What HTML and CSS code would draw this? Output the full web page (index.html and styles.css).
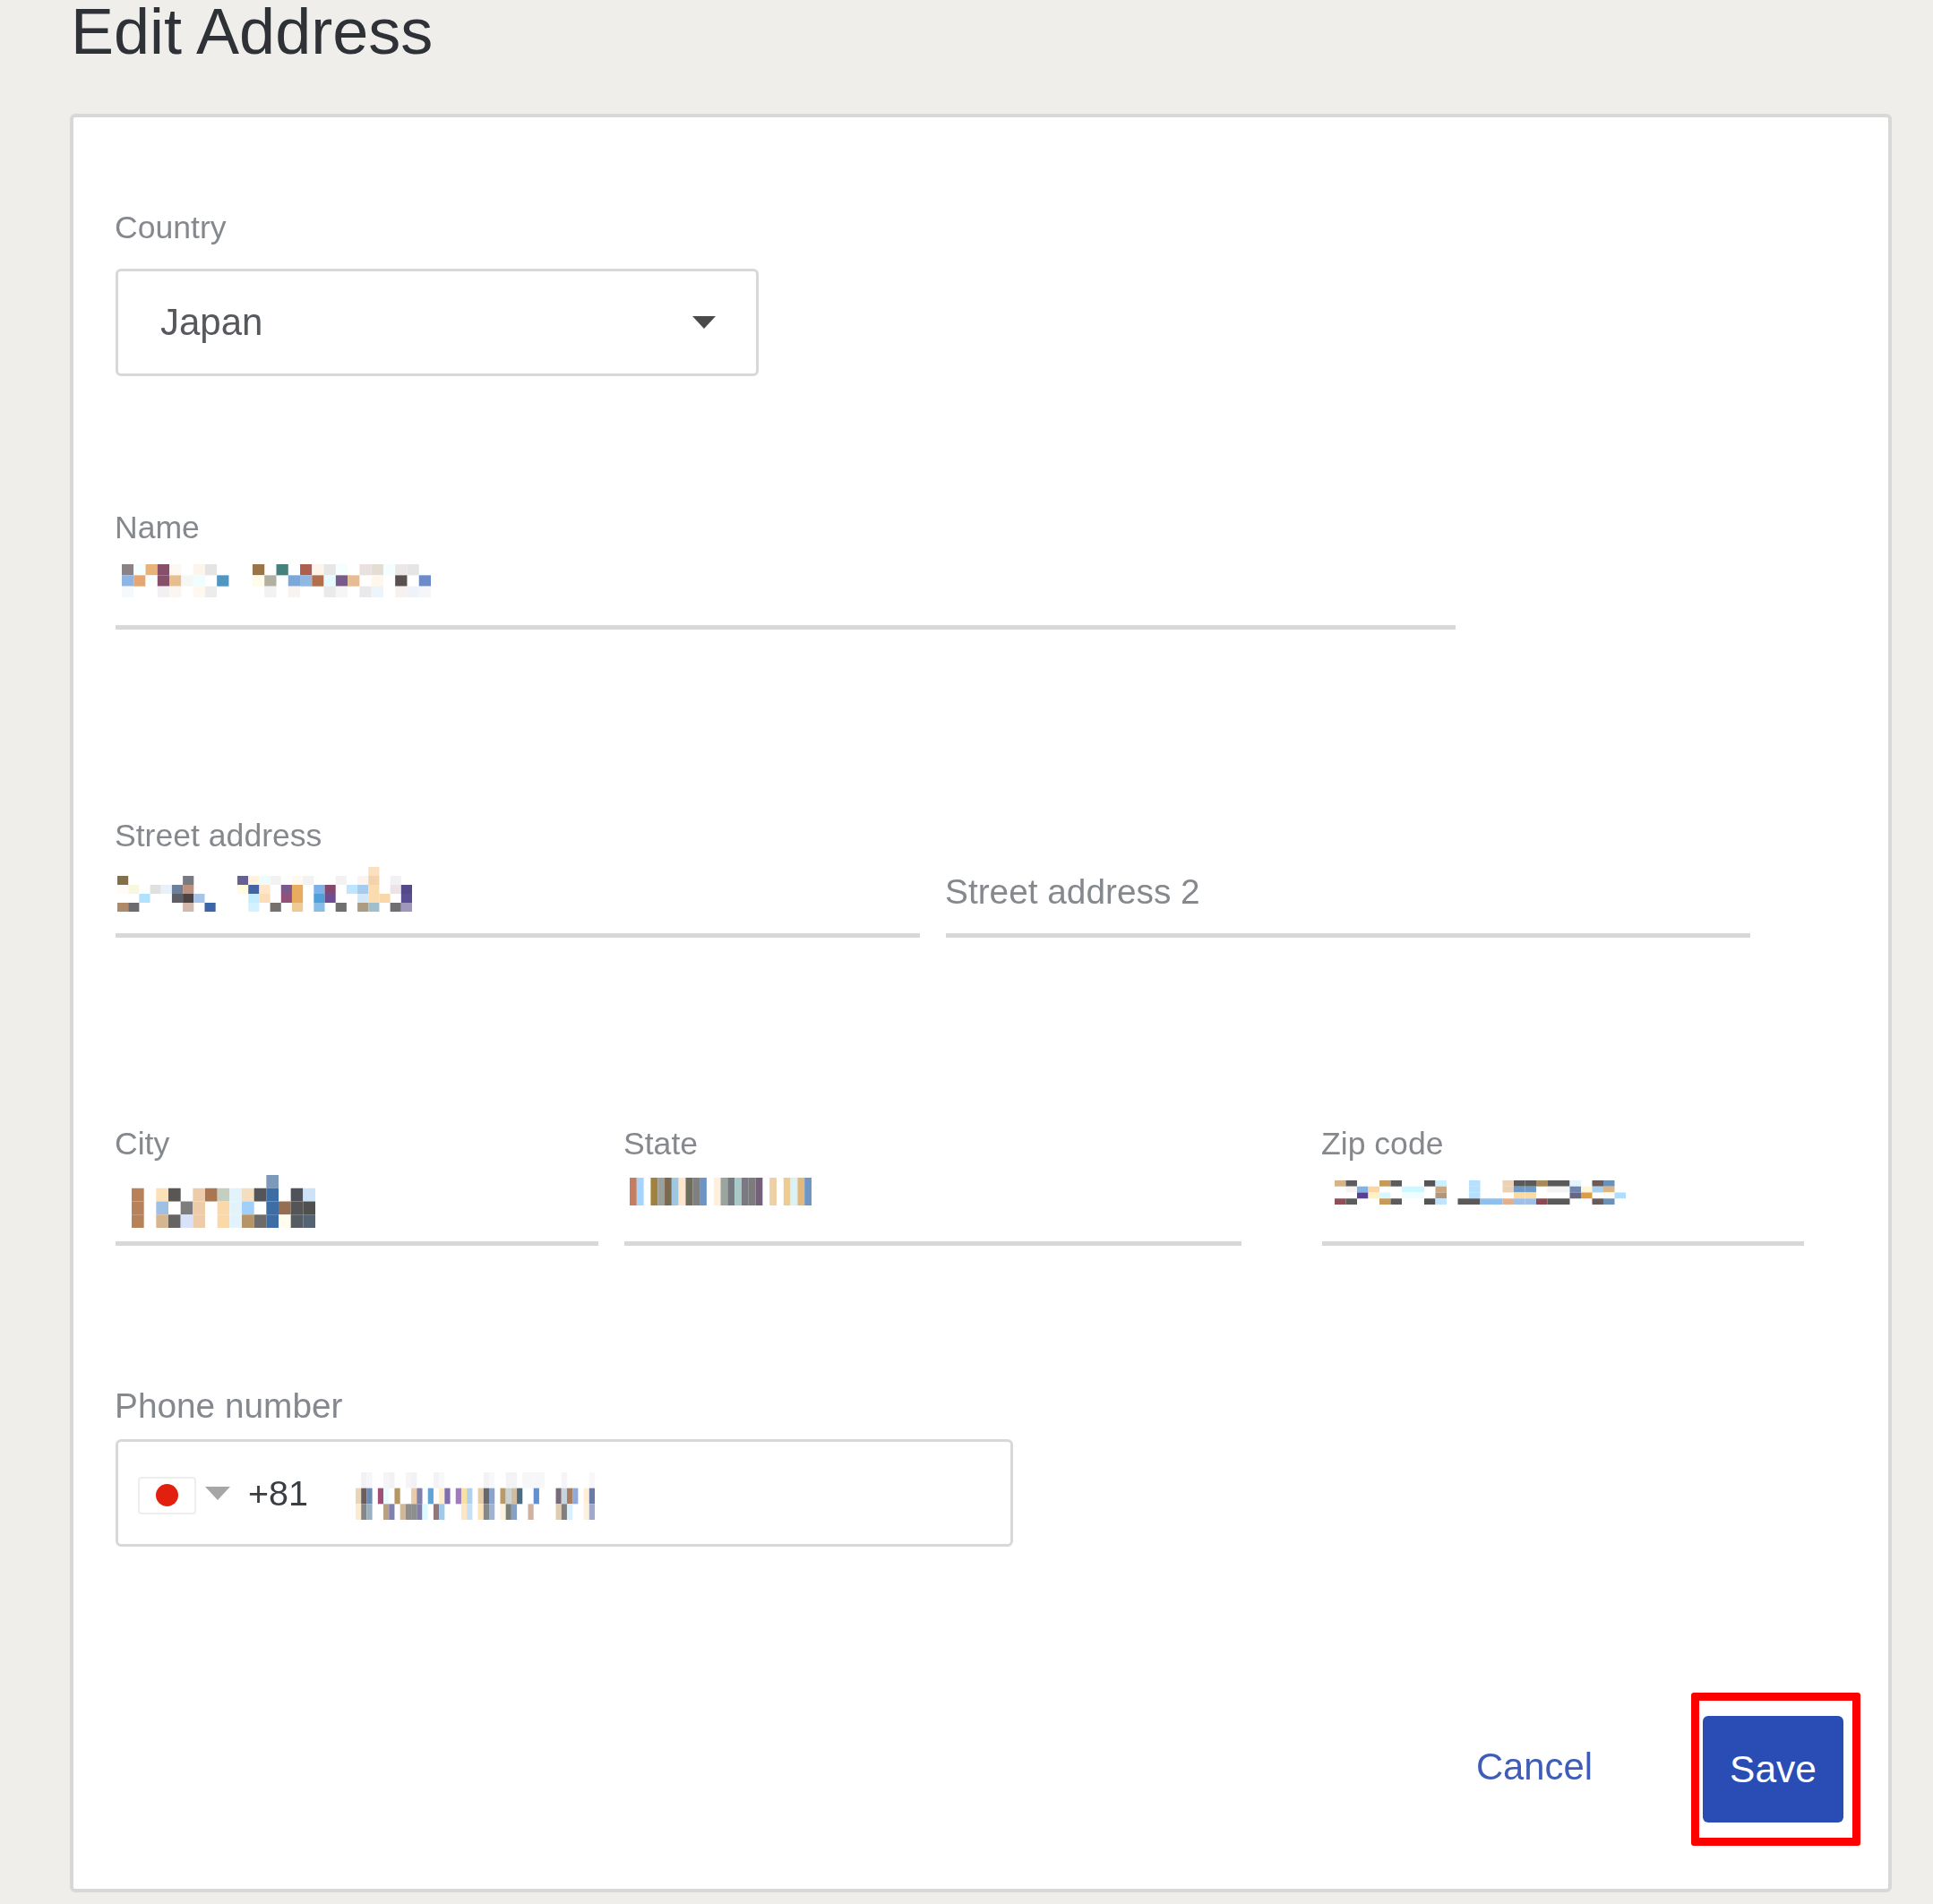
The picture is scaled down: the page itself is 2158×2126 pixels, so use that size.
FILE: index.html
```html
<!DOCTYPE html>
<html lang="en">
<head>
<meta charset="utf-8">
<title>Edit Address</title>
<link rel="stylesheet" href="styles.css">
</head>
<body>
<main class="page">
  <h1 class="title">Edit Address</h1>
  <form class="card">
    <div class="field">
      <div class="label">Country</div>
      <div class="select">
        <span class="select-value">Japan</span>
        <svg class="select-caret" width="26" height="14" viewBox="0 0 26 14"><path d="M0 0H26L13 14Z"/></svg>
      </div>
    </div>

    <div class="row row-name">
      <div class="field field-name">
        <div class="label">Name</div>
        <div class="input input-name">
          <svg class="mosaic" width="345" height="37" viewBox="0 0 26 3" preserveAspectRatio="none">
            <rect x="0" y="0" fill="#8a8285"/><rect x="1" y="0" fill="#f6ffff"/><rect x="2" y="0" fill="#e9b277"/><rect x="3" y="0" fill="#87506a"/><rect x="4" y="0" fill="#fdf8f2"/><rect x="6" y="0" fill="#fdf5ec"/><rect x="7" y="0" fill="#e4e4e4"/><rect x="11" y="0" fill="#9b7447"/><rect x="13" y="0" fill="#45827f"/><rect x="15" y="0" fill="#ae5f50"/><rect x="16" y="0" fill="#fdf4ec"/><rect x="17" y="0" fill="#e6e6e6"/><rect x="18" y="0" fill="#f6ffff"/><rect x="20" y="0" fill="#ebe0e0"/><rect x="21" y="0" fill="#e4ddd4"/><rect x="22" y="0" fill="#f3ffff"/><rect x="23" y="0" fill="#ebe7e6"/><rect x="24" y="0" fill="#e6e5e5"/>
            <rect x="0" y="1" fill="#8fb5e4"/><rect x="1" y="1" fill="#e5a672"/><rect x="2" y="1" fill="#fbffff"/><rect x="3" y="1" fill="#87506a"/><rect x="4" y="1" fill="#e8be8e"/><rect x="5" y="1" fill="#f6f6f4"/><rect x="6" y="1" fill="#effdff"/><rect x="8" y="1" fill="#4f97c1"/><rect x="11" y="1" fill="#fffde9"/><rect x="12" y="1" fill="#b1b1a1"/><rect x="14" y="1" fill="#7ca8d9"/><rect x="15" y="1" fill="#8fb8e3"/><rect x="16" y="1" fill="#b26f4b"/><rect x="17" y="1" fill="#e6fbff"/><rect x="18" y="1" fill="#775b8b"/><rect x="19" y="1" fill="#e6bd92"/><rect x="21" y="1" fill="#fff7eb"/><rect x="23" y="1" fill="#595050"/><rect x="25" y="1" fill="#6b8bc9"/>
            <rect x="0" y="2" fill="#f5f9fc"/><rect x="3" y="2" fill="#f2f0f2"/><rect x="4" y="2" fill="#fbf6f2"/><rect x="6" y="2" fill="#fef8f0"/><rect x="7" y="2" fill="#ececec"/><rect x="12" y="2" fill="#f3f1f2"/><rect x="14" y="2" fill="#f8f3ee"/><rect x="17" y="2" fill="#eaeaea"/><rect x="18" y="2" fill="#f6f6f8"/><rect x="20" y="2" fill="#e9e9eb"/><rect x="21" y="2" fill="#ecf4fc"/><rect x="23" y="2" fill="#f6f0ee"/><rect x="24" y="2" fill="#eef3fa"/><rect x="25" y="2" fill="#f6f6f9"/>
          </svg>
        </div>
      </div>
    </div>

    <div class="row row-street">
      <div class="field field-half">
        <div class="label">Street address</div>
        <div class="input input-street">
          <svg class="mosaic" width="329" height="50" viewBox="0 0 27 5" preserveAspectRatio="none">
            <rect x="23" y="0" fill="#fbe0c0"/>
            <rect x="0" y="1" fill="#82704c"/><rect x="6" y="1" fill="#797b82"/><rect x="11" y="1" fill="#676092"/><rect x="12" y="1" fill="#fff3de"/><rect x="13" y="1" fill="#effcff"/><rect x="14" y="1" fill="#f2f2f3"/><rect x="16" y="1" fill="#fff9f2"/><rect x="17" y="1" fill="#f2f2f2"/><rect x="20" y="1" fill="#f2f2f5"/><rect x="22" y="1" fill="#fcf4f0"/><rect x="23" y="1" fill="#f2d3ab"/><rect x="25" y="1" fill="#f1f0f2"/>
            <rect x="0" y="2" fill="#fffcf8"/><rect x="1" y="2" fill="#f8f8e0"/><rect x="3" y="2" fill="#e0e0e0"/><rect x="4" y="2" fill="#e8f0fa"/><rect x="5" y="2" fill="#6c7f9b"/><rect x="6" y="2" fill="#bb9280"/><rect x="11" y="2" fill="#fffce0"/><rect x="12" y="2" fill="#4564a5"/><rect x="13" y="2" fill="#ffe5c9"/><rect x="15" y="2" fill="#7a5a8a"/><rect x="16" y="2" fill="#e8ab5f"/><rect x="18" y="2" fill="#7cb0e6"/><rect x="19" y="2" fill="#83486b"/><rect x="21" y="2" fill="#bde5ff"/><rect x="22" y="2" fill="#a6cbec"/><rect x="23" y="2" fill="#fbdcb0"/><rect x="25" y="2" fill="#ece3e6"/><rect x="26" y="2" fill="#56498a"/>
            <rect x="2" y="3" fill="#b0e1ff"/><rect x="5" y="3" fill="#5c5f66"/><rect x="6" y="3" fill="#4c4444"/><rect x="7" y="3" fill="#a5c4e8"/><rect x="12" y="3" fill="#c4eeff"/><rect x="13" y="3" fill="#fddcb9"/><rect x="15" y="3" fill="#93507a"/><rect x="16" y="3" fill="#e8ab5f"/><rect x="18" y="3" fill="#4f9fd8"/><rect x="19" y="3" fill="#6f4d94"/><rect x="22" y="3" fill="#d0e8f8"/><rect x="23" y="3" fill="#fbdcb0"/><rect x="24" y="3" fill="#f8d8a8"/><rect x="26" y="3" fill="#5a4f92"/>
            <rect x="0" y="4" fill="#ae8a68"/><rect x="1" y="4" fill="#6c6c70"/><rect x="6" y="4" fill="#d3b8ae"/><rect x="8" y="4" fill="#3c66a8"/><rect x="12" y="4" fill="#d3f2ff"/><rect x="14" y="4" fill="#76716c"/><rect x="16" y="4" fill="#efca95"/><rect x="18" y="4" fill="#88bde5"/><rect x="20" y="4" fill="#6f6f72"/><rect x="22" y="4" fill="#ac9c84"/><rect x="23" y="4" fill="#9fbfcc"/><rect x="25" y="4" fill="#6f6f72"/><rect x="26" y="4" fill="#a097bd"/>
          </svg>
        </div>
      </div>
      <div class="field field-half">
        <div class="label"></div>
        <div class="input input-placeholder">Street address 2</div>
      </div>
    </div>

    <div class="row row-city">
      <div class="field field-city">
        <div class="label">City</div>
        <div class="input input-city">
          <svg class="mosaic" width="205" height="59" viewBox="0 0 15 4" preserveAspectRatio="none">
            <rect x="11" y="0" fill="#7c99bb"/>
            <rect x="0" y="1" fill="#b7815a"/><rect x="2" y="1" fill="#fbe0b8"/><rect x="3" y="1" fill="#595654"/><rect x="5" y="1" fill="#eeccaa"/><rect x="6" y="1" fill="#a9764f"/><rect x="7" y="1" fill="#c5cfc0"/><rect x="8" y="1" fill="#e2f3fc"/><rect x="9" y="1" fill="#f3dfc0"/><rect x="10" y="1" fill="#535558"/><rect x="11" y="1" fill="#3e6ca5"/><rect x="13" y="1" fill="#4f5259"/><rect x="14" y="1" fill="#cbe2f8"/>
            <rect x="0" y="2" fill="#b7815a"/><rect x="2" y="2" fill="#9fc0e5"/><rect x="4" y="2" fill="#7d7d7d"/><rect x="5" y="2" fill="#eeccaa"/><rect x="7" y="2" fill="#fad8a8"/><rect x="8" y="2" fill="#e2f3fc"/><rect x="9" y="2" fill="#a0cffc"/><rect x="11" y="2" fill="#3e6ca5"/><rect x="12" y="2" fill="#956f52"/><rect x="13" y="2" fill="#555555"/><rect x="14" y="2" fill="#50504e"/>
            <rect x="0" y="3" fill="#b7815a"/><rect x="2" y="3" fill="#d6b690"/><rect x="3" y="3" fill="#656462"/><rect x="4" y="3" fill="#d8e2f8"/><rect x="5" y="3" fill="#eeccaa"/><rect x="7" y="3" fill="#fad8a8"/><rect x="8" y="3" fill="#e2f3fc"/><rect x="9" y="3" fill="#b5946a"/><rect x="10" y="3" fill="#6e6c6a"/><rect x="11" y="3" fill="#3e6ca5"/><rect x="12" y="3" fill="#fffcf0"/><rect x="13" y="3" fill="#565c62"/><rect x="14" y="3" fill="#546472"/>
          </svg>
        </div>
      </div>
      <div class="field field-state">
        <div class="label">State</div>
        <div class="input input-state">
          <svg class="mosaic" width="203" height="31" viewBox="0 0 26 1" preserveAspectRatio="none">
            <rect x="0" y="0" fill="#c47d60"/><rect x="1" y="0" fill="#a5d4ff"/><rect x="3" y="0" fill="#a0813d"/><rect x="4" y="0" fill="#9ca09a"/><rect x="5" y="0" fill="#7c6a50"/><rect x="6" y="0" fill="#9fc7e0"/><rect x="7" y="0" fill="#fde6cd"/><rect x="8" y="0" fill="#6e6e5e"/><rect x="9" y="0" fill="#808080"/><rect x="10" y="0" fill="#6c94c4"/><rect x="12" y="0" fill="#fff0de"/><rect x="13" y="0" fill="#9aa59d"/><rect x="14" y="0" fill="#757b80"/><rect x="15" y="0" fill="#a9c9c9"/><rect x="16" y="0" fill="#7a7880"/><rect x="17" y="0" fill="#7c7c7c"/><rect x="18" y="0" fill="#75607a"/><rect x="20" y="0" fill="#edd0a4"/><rect x="22" y="0" fill="#eecb90"/><rect x="23" y="0" fill="#d8f2f8"/><rect x="24" y="0" fill="#e3b87c"/><rect x="25" y="0" fill="#7096c6"/>
          </svg>
        </div>
      </div>
      <div class="field field-zip">
        <div class="label">Zip code</div>
        <div class="input input-zip">
          <svg class="mosaic" width="325" height="27" viewBox="0 0 26 4" preserveAspectRatio="none">
            <rect x="0" y="0" fill="#d8b388"/><rect x="1" y="0" fill="#5c5c5c"/><rect x="4" y="0" fill="#c89a5a"/><rect x="5" y="0" fill="#5c5c5c"/><rect x="8" y="0" fill="#555555"/><rect x="9" y="0" fill="#cdf0ff"/><rect x="12" y="0" fill="#b5e0ff"/><rect x="15" y="0" fill="#ecd2b4"/><rect x="16" y="0" fill="#5a5a5a"/><rect x="17" y="0" fill="#5a5a5a"/><rect x="18" y="0" fill="#a78a58"/><rect x="19" y="0" fill="#5a5a5a"/><rect x="20" y="0" fill="#5a5a5a"/><rect x="21" y="0" fill="#e2f5ff"/><rect x="23" y="0" fill="#6a5a5a"/><rect x="24" y="0" fill="#6a90b8"/>
            <rect x="1" y="1" fill="#f4f4f4"/><rect x="2" y="1" fill="#83b3e5"/><rect x="3" y="1" fill="#fcd5a5"/><rect x="6" y="1" fill="#cdf8ff"/><rect x="7" y="1" fill="#cdf8ff"/><rect x="9" y="1" fill="#cca680"/><rect x="12" y="1" fill="#b5e0ff"/><rect x="15" y="1" fill="#ecd2b4"/><rect x="16" y="1" fill="#6e9ac8"/><rect x="17" y="1" fill="#6e9ac8"/><rect x="19" y="1" fill="#f4f4f4"/><rect x="20" y="1" fill="#f4f4f4"/><rect x="21" y="1" fill="#6e85b0"/><rect x="22" y="1" fill="#fff5d8"/><rect x="23" y="1" fill="#a8d0ee"/><rect x="24" y="1" fill="#dcb584"/>
            <rect x="2" y="2" fill="#5a3f96"/><rect x="3" y="2" fill="#fff2c0"/><rect x="4" y="2" fill="#d8f8ff"/><rect x="6" y="2" fill="#effdff"/><rect x="7" y="2" fill="#effdff"/><rect x="9" y="2" fill="#b0967c"/><rect x="12" y="2" fill="#b5e0ff"/><rect x="16" y="2" fill="#fddba0"/><rect x="17" y="2" fill="#fddba0"/><rect x="21" y="2" fill="#666685"/><rect x="22" y="2" fill="#dd9c48"/><rect x="24" y="2" fill="#fffaf0"/><rect x="25" y="2" fill="#aedeff"/>
            <rect x="0" y="3" fill="#8f4f58"/><rect x="1" y="3" fill="#5c5c5c"/><rect x="4" y="3" fill="#c89a5a"/><rect x="5" y="3" fill="#5c5c5c"/><rect x="8" y="3" fill="#555555"/><rect x="9" y="3" fill="#c0e4ff"/><rect x="11" y="3" fill="#5a5a5a"/><rect x="12" y="3" fill="#5a5a5a"/><rect x="13" y="3" fill="#8fbfec"/><rect x="14" y="3" fill="#8fbfec"/><rect x="15" y="3" fill="#e4b08c"/><rect x="16" y="3" fill="#a0bfe6"/><rect x="17" y="3" fill="#a0bfe6"/><rect x="18" y="3" fill="#8a4a55"/><rect x="19" y="3" fill="#5a5a5a"/><rect x="20" y="3" fill="#5a5a5a"/><rect x="23" y="3" fill="#6a5a5a"/><rect x="24" y="3" fill="#6a90b8"/>
          </svg>
        </div>
      </div>
    </div>

    <div class="row-phone">
      <div class="label label-phone">Phone number</div>
      <div class="phone">
        <span class="flag"><span class="flag-dot"></span></span>
        <svg class="phone-caret" width="28" height="15" viewBox="0 0 28 15"><path d="M0 0H28L14 15Z"/></svg>
        <span class="dial">+81</span>
        <svg class="mosaic mosaic-phone" width="267" height="53" viewBox="0 0 43 3" preserveAspectRatio="none">
          <rect x="1" y="0" fill="#f2f2f6"/><rect x="2" y="0" fill="#f6f6fa"/><rect x="5" y="0" fill="#f5f5f8"/><rect x="6" y="0" fill="#f2f2f6"/><rect x="9" y="0" fill="#f8f4f6"/><rect x="10" y="0" fill="#f2f2f6"/><rect x="14" y="0" fill="#f3f2f6"/><rect x="15" y="0" fill="#f8f8fb"/><rect x="23" y="0" fill="#f3f2f5"/><rect x="24" y="0" fill="#f8f8fb"/><rect x="27" y="0" fill="#f3f3f6"/><rect x="28" y="0" fill="#f3f3f6"/><rect x="30" y="0" fill="#f7f7f9"/><rect x="31" y="0" fill="#f7f7f9"/><rect x="32" y="0" fill="#f7f7f9"/><rect x="33" y="0" fill="#f7f7f9"/><rect x="37" y="0" fill="#f6f4f6"/><rect x="42" y="0" fill="#f8f8fb"/>
          <rect x="0" y="1" fill="#e8d6b8"/><rect x="1" y="1" fill="#6b5e60"/><rect x="2" y="1" fill="#6a8ab0"/><rect x="4" y="1" fill="#a04f78"/><rect x="5" y="1" fill="#e8fcff"/><rect x="7" y="1" fill="#b59666"/><rect x="10" y="1" fill="#e8ccaa"/><rect x="11" y="1" fill="#8080a8"/><rect x="13" y="1" fill="#60a4d8"/><rect x="15" y="1" fill="#fdecc8"/><rect x="16" y="1" fill="#8070b0"/><rect x="18" y="1" fill="#a07cbc"/><rect x="19" y="1" fill="#f8e0a0"/><rect x="20" y="1" fill="#b0d0ec"/><rect x="22" y="1" fill="#e8ccaa"/><rect x="23" y="1" fill="#686868"/><rect x="24" y="1" fill="#8aa4cc"/><rect x="26" y="1" fill="#bb9a6a"/><rect x="27" y="1" fill="#c8d4d4"/><rect x="28" y="1" fill="#d0bca0"/><rect x="29" y="1" fill="#506a80"/><rect x="32" y="1" fill="#6090d0"/><rect x="36" y="1" fill="#7a6a78"/><rect x="37" y="1" fill="#c8d4dc"/><rect x="38" y="1" fill="#a87e64"/><rect x="39" y="1" fill="#90aad8"/><rect x="41" y="1" fill="#fdeed4"/><rect x="42" y="1" fill="#6a7aa8"/>
          <rect x="0" y="2" fill="#fdebd0"/><rect x="1" y="2" fill="#858888"/><rect x="2" y="2" fill="#9ab0c0"/><rect x="5" y="2" fill="#b8a080"/><rect x="6" y="2" fill="#8080b0"/><rect x="8" y="2" fill="#d0b898"/><rect x="9" y="2" fill="#8e8e8e"/><rect x="10" y="2" fill="#8e8e8e"/><rect x="11" y="2" fill="#7f7fa5"/><rect x="12" y="2" fill="#dcfaff"/><rect x="14" y="2" fill="#907878"/><rect x="15" y="2" fill="#a0c8e8"/><rect x="19" y="2" fill="#fde6c4"/><rect x="20" y="2" fill="#c8dff4"/><rect x="22" y="2" fill="#fde4b8"/><rect x="23" y="2" fill="#888888"/><rect x="24" y="2" fill="#a0b4d0"/><rect x="26" y="2" fill="#fdf2e0"/><rect x="27" y="2" fill="#788078"/><rect x="28" y="2" fill="#88a0c8"/><rect x="31" y="2" fill="#d0b0a0"/><rect x="36" y="2" fill="#e0ccb0"/><rect x="37" y="2" fill="#7f7f7f"/><rect x="38" y="2" fill="#d8f0ff"/><rect x="41" y="2" fill="#fdf0dc"/><rect x="42" y="2" fill="#a0aac8"/>
        </svg>
      </div>
    </div>

    <div class="actions">
      <a class="cancel">Cancel</a>
      <div class="save-wrap">
        <button class="save" type="button">Save</button>
        <span class="highlight"></span>
      </div>
    </div>
  </form>
</main>
</body>
</html>
```

FILE: styles.css
```css
* { box-sizing: border-box; }

html, body {
  margin: 0;
  padding: 0;
  background: #efeeeb;
}

body {
  height: 2126px;
  overflow: hidden;
  font-family: "Liberation Sans", Arial, sans-serif;
}

.page {
  padding: 3px 46px 0 78px;
  filter: blur(0.55px);
}

.title {
  margin: 0 0 60px 1px;
  font-size: 72px;
  font-weight: 400;
  line-height: 64px;
  color: #2e3136;
}

.card {
  width: 2034px;
  height: 1986px;
  padding: 101px 50px 0 47px;
  background: #fff;
  border: 4px solid #d8d8d6;
  border-radius: 6px;
}

.label {
  height: 44px;
  margin-left: -1px;
  font-size: 35.6px;
  line-height: 44px;
  color: #85888c;
}

.select {
  display: flex;
  align-items: center;
  justify-content: space-between;
  width: 718px;
  height: 120px;
  margin-top: 24px;
  padding: 0 45px 0 47px;
  border: 3px solid #d8d8d8;
  border-radius: 6px;
}

.select-value {
  font-size: 42px;
  color: #55585c;
}

.select-caret { fill: #4a4a4a; }

.row { display: flex; }
.row-name { margin-top: 147px; }
.row-street { margin-top: 208px; gap: 29px; }
.row-city { margin-top: 208px; }

.input {
  height: 92px;
  border-bottom: 5px solid #d8d8d8;
}

.field-name { width: 1496px; }
.field-half { width: 898px; }
.field-city { width: 539px; margin-right: 29px; }
.field-state { width: 689px; margin-right: 90px; }
.field-zip { width: 538px; }

.mosaic { display: block; }

.mosaic rect {
  width: 1px;
  height: 1px;
}

.input-name { padding: 19px 0 0 7px; }
.input-street { padding: 13px 0 0 2px; }
.input-city { padding: 13px 0 0 18px; }
.input-state { padding: 16px 0 0 6px; }
.input-zip { padding: 19px 0 0 14px; }

.input-placeholder {
  padding-top: 19px;
  font-size: 38.8px;
  line-height: 44px;
  text-indent: -1px;
  color: #85888c;
}

.row-phone { margin-top: 157px; }

.label-phone { font-size: 38.8px; }

.phone {
  display: flex;
  align-items: center;
  width: 1002px;
  height: 120px;
  margin-top: 15px;
  padding-left: 22px;
  border: 3px solid #d8d8d8;
  border-radius: 6px;
}

.flag {
  display: flex;
  align-items: center;
  justify-content: center;
  width: 65px;
  height: 42px;
  margin-top: 5px;
  background: #fff;
  border: 2px solid #eeeeee;
  border-radius: 4px;
}

.flag-dot {
  width: 25px;
  height: 25px;
  background: #e2200f;
  border-radius: 50%;
}

.phone-caret {
  margin: 0 20px 0 10px;
  fill: #a6a6a6;
}

.dial {
  font-size: 39.5px;
  color: #3a3d42;
}

.mosaic-phone {
  margin: 6px 0 0 53px;
}

.actions {
  display: flex;
  align-items: center;
  justify-content: flex-end;
  gap: 123px;
  margin-top: 189px;
}

.cancel {
  font-size: 41.8px;
  color: #3f5cb8;
  margin-top: -6px;
}

.save-wrap { position: relative; }

.save {
  display: block;
  width: 157px;
  height: 119px;
  padding: 0;
  font-family: inherit;
  font-size: 42.5px;
  color: #fff;
  background: #2a4db5;
  border: 0;
  border-radius: 6px;
}

.highlight {
  position: absolute;
  top: -26px;
  right: -19px;
  bottom: -26px;
  left: -13px;
  border: 9px solid #fe0000;
  border-radius: 3px;
}
```
